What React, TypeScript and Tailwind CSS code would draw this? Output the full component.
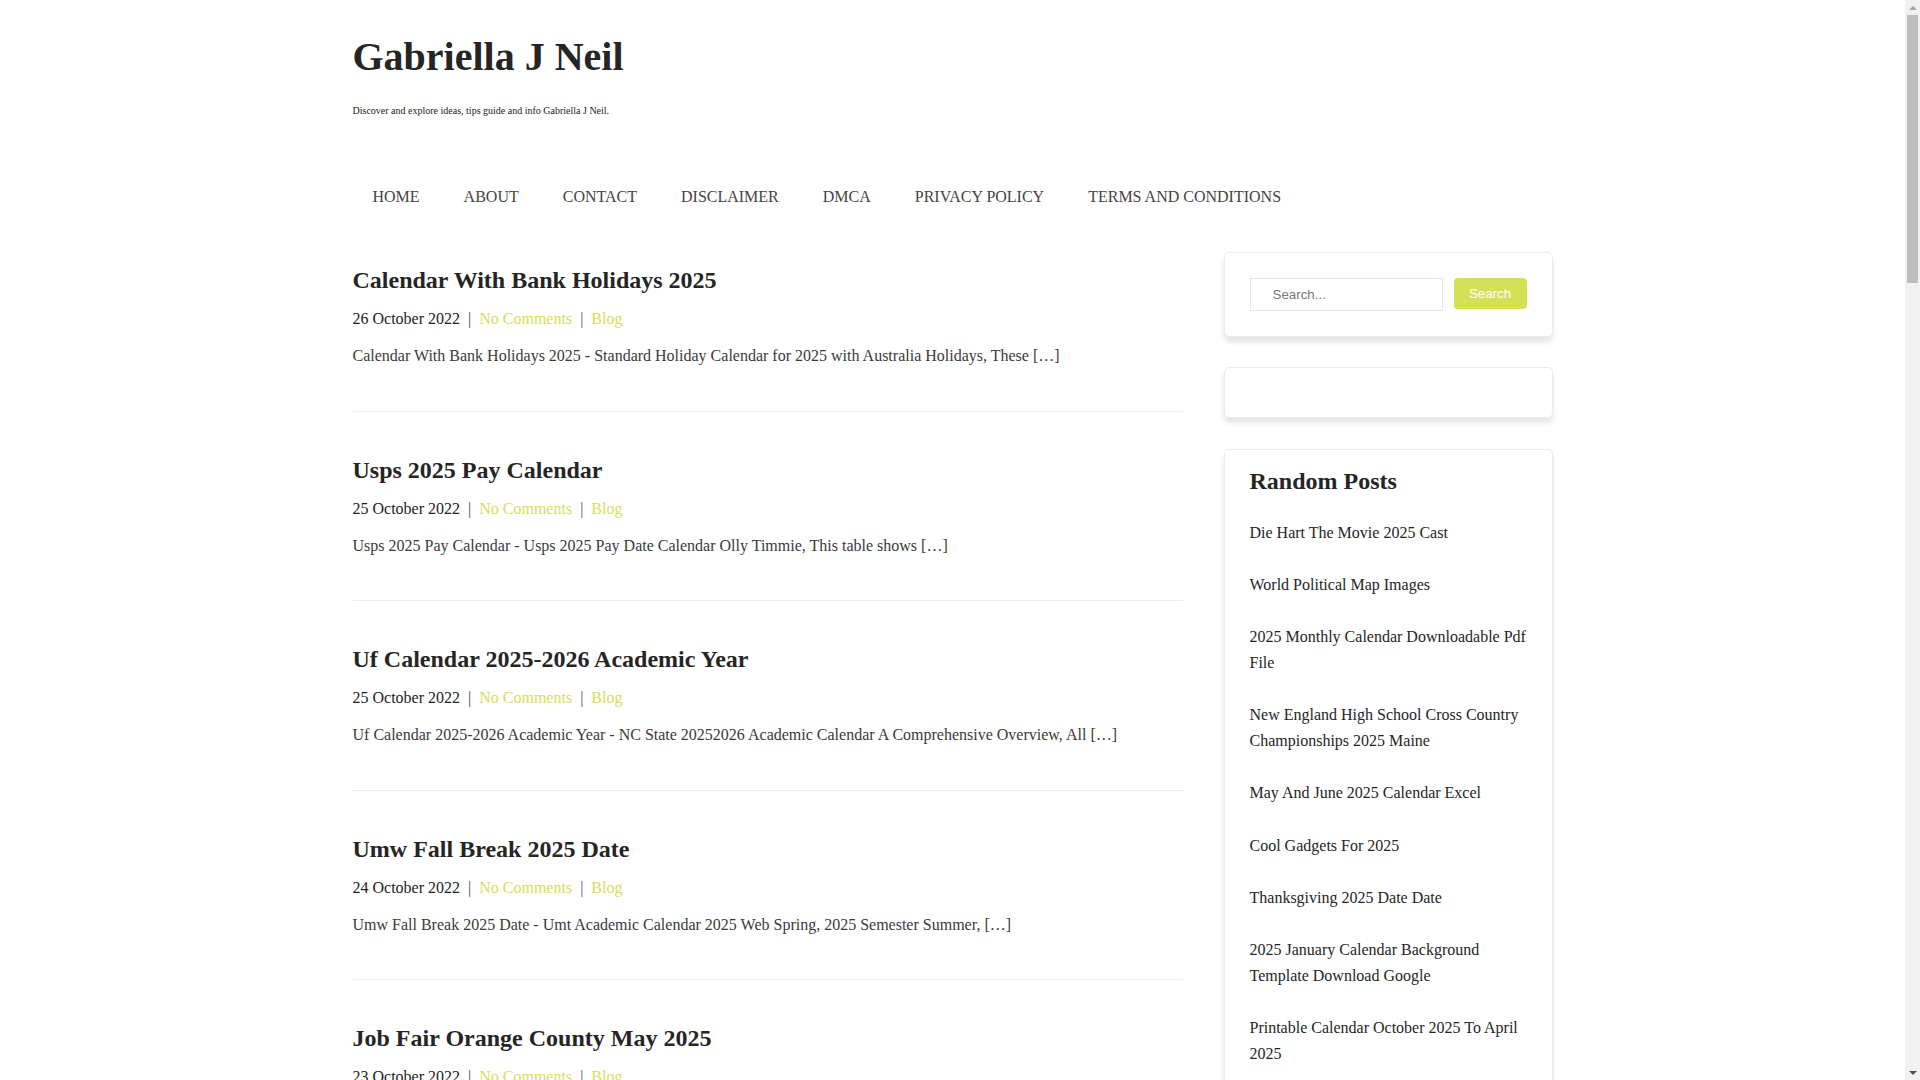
import React from 'react';

const navItems = ['Home', 'About', 'Contact', 'Disclaimer', 'DMCA', 'Privacy Policy', 'Terms and Conditions'];

const posts = [
  {
    title: 'Calendar With Bank Holidays 2025',
    date: '26 October 2022',
    excerpt: 'Calendar With Bank Holidays 2025 - Standard Holiday Calendar for 2025 with Australia Holidays, These […]',
  },
  {
    title: 'Usps 2025 Pay Calendar',
    date: '25 October 2022',
    excerpt: 'Usps 2025 Pay Calendar - Usps 2025 Pay Date Calendar Olly Timmie, This table shows […]',
  },
  {
    title: 'Uf Calendar 2025-2026 Academic Year',
    date: '25 October 2022',
    excerpt: 'Uf Calendar 2025-2026 Academic Year - NC State 20252026 Academic Calendar A Comprehensive Overview, All […]',
  },
  {
    title: 'Umw Fall Break 2025 Date',
    date: '24 October 2022',
    excerpt: 'Umw Fall Break 2025 Date - Umt Academic Calendar 2025 Web Spring, 2025 Semester Summer, […]',
  },
  {
    title: 'Job Fair Orange County May 2025',
    date: '23 October 2022',
    excerpt: 'Job Fair Orange County May 2025 - Orange County Job Fair 2025 Schedule and Locations, Employers […]',
  },
  {
    title: 'Lunar Calendar 2025 Printable',
    date: '23 October 2022',
    excerpt: 'Lunar Calendar 2025 Printable - Moon Phases Calendar 2025 Free Printable Template, Every […]',
  },
  {
    title: 'School Holidays 2025 Victoria',
    date: '22 October 2022',
    excerpt: 'School Holidays 2025 Victoria - Term Dates and Public Holidays for Victoria Schools, The […]',
  },
  {
    title: 'Weekly Planner Template 2025',
    date: '22 October 2022',
    excerpt: 'Weekly Planner Template 2025 - Free Weekly Planner Printable with Notes Section, Plan […]',
  },
  {
    title: 'Fiscal Year Calendar 2025 Excel',
    date: '21 October 2022',
    excerpt: 'Fiscal Year Calendar 2025 Excel - Fiscal Calendar Template 2025 with Week Numbers, This […]',
  },
  {
    title: 'Ramadan 2025 Calendar Dates',
    date: '21 October 2022',
    excerpt: 'Ramadan 2025 Calendar Dates - Ramadan Timetable 2025 Sehri and Iftar Times, The […]',
  },
  {
    title: 'Nfl Schedule 2025 Printable',
    date: '20 October 2022',
    excerpt: 'Nfl Schedule 2025 Printable - Full Season Schedule by Week with Kickoff Times, All […]',
  },
  {
    title: 'Academic Calendar 2025 Uc Davis',
    date: '20 October 2022',
    excerpt: 'Academic Calendar 2025 Uc Davis - Quarter Dates and Registration Deadlines, Students […]',
  },
  {
    title: 'July 2025 Calendar With Holidays',
    date: '19 October 2022',
    excerpt: 'July 2025 Calendar With Holidays - Printable July Calendar with Federal Holidays, Use […]',
  },
  {
    title: 'Easter Sunday 2025 Date',
    date: '19 October 2022',
    excerpt: 'Easter Sunday 2025 Date - When Is Easter 2025 and Holy Week Dates, Easter […]',
  },
  {
    title: 'Pay Period Calendar 2025 Federal',
    date: '18 October 2022',
    excerpt: 'Pay Period Calendar 2025 Federal - Federal Pay Period Calendar 2025 Opm, The […]',
  },
  {
    title: 'Chinese New Year 2025 Animal',
    date: '18 October 2022',
    excerpt: 'Chinese New Year 2025 Animal - Year of the Snake 2025 Meaning and Traditions, The […]',
  },
  {
    title: 'Disney Crowd Calendar 2025',
    date: '17 October 2022',
    excerpt: 'Disney Crowd Calendar 2025 - Best Days to Visit Disney World in 2025, Plan […]',
  },
  {
    title: 'Printable Monthly Calendar 2025 Word',
    date: '17 October 2022',
    excerpt: 'Printable Monthly Calendar 2025 Word - Editable Monthly Calendar Template Docx, Download […]',
  },
  {
    title: 'Hebrew Calendar 2025 Holidays',
    date: '16 October 2022',
    excerpt: 'Hebrew Calendar 2025 Holidays - Jewish Holidays 2025 Dates and Observances, The […]',
  },
  {
    title: 'Spring Break 2025 Dates Texas',
    date: '16 October 2022',
    excerpt: 'Spring Break 2025 Dates Texas - Texas School Districts Spring Break Schedule, Most […]',
  },
];

const randomPosts = [
  'Die Hart The Movie 2025 Cast',
  'World Political Map Images',
  '2025 Monthly Calendar Downloadable Pdf File',
  'New England High School Cross Country Championships 2025 Maine',
  'May And June 2025 Calendar Excel',
  'Cool Gadgets For 2025',
  'Thanksgiving 2025 Date Date',
  '2025 January Calendar Background Template Download Google',
  'Printable Calendar October 2025 To April 2025',
  'Winter Solstice 2025 Date And Time',
];

// the page in the screenshot shows a classic scrollbar, drawn here over the right edge
function Scrollbar() {
  return (
    <div className="fixed top-0 right-0 flex h-screen w-[15px] flex-col bg-[#f1f1f1]">
      <div className="flex h-[15px] items-center justify-center">
        <svg width="8" height="4" viewBox="0 0 8 4">
          <path d="M0 4 L4 0 L8 4 Z" fill="#a3a3a3" />
        </svg>
      </div>
      <div className="mx-[2px] h-[268px] bg-[#bdbdbd]"></div>
      <div className="flex-1"></div>
      <div className="flex h-[15px] items-center justify-center">
        <svg width="8" height="4" viewBox="0 0 8 4">
          <path d="M0 0 L8 0 L4 4 Z" fill="#505050" />
        </svg>
      </div>
    </div>
  );
}

export default function App() {
  return (
    <div className="min-h-screen bg-white pr-[15px] font-['Liberation_Serif','Times_New_Roman',serif] text-[#333]">
      <div className="mx-auto w-[1200px]">
        <header className="pt-[33px]">
          <h1 className="text-[40px] font-bold leading-[48px] text-[#252525]">Gabriella J Neil</h1>
          <p className="mt-[22px] text-[10px] leading-[15px] text-[#222]">
            Discover and explore ideas, tips guide and info Gabriella J Neil.
          </p>
        </header>

        <nav className="mt-[67px]">
          <ul className="flex gap-1">
            {navItems.map((item) => (
              <li key={item}>
                <a href="#" className="block px-5 text-base leading-6 uppercase text-[#444]">
                  {item}
                </a>
              </li>
            ))}
          </ul>
        </nav>

        <div className="mt-[43px] flex items-start justify-between">
          <main className="w-[830px]">
            {posts.map((post, i) => (
              <article
                key={post.title}
                className={`${i === 0 ? 'pt-[13px]' : 'pt-[43px]'} pb-[42.5px] border-b border-[#ececec]`}
              >
                <h2 className="text-[24px] font-bold leading-[30px] text-[#252525]">
                  <a href="#">{post.title}</a>
                </h2>
                <div className="mt-3 text-base leading-6 text-[#222]">
                  <span>{post.date}</span>
                  <span className="mx-2 text-[#444]">|</span>
                  <a href="#" className="text-[#d4e157]">No Comments</a>
                  <span className="mx-2 text-[#555]">|</span>
                  <a href="#" className="text-[#d4e157]">Blog</a>
                </div>
                <p className="mt-[13px] text-base leading-6 text-[#3a3a3a]">{post.excerpt}</p>
              </article>
            ))}

            <div className="flex gap-2 py-10 text-base">
              <span className="rounded-[4px] bg-[#d4e157] px-3 py-1 text-white">1</span>
              <a href="#" className="rounded-[4px] border border-[#e9e9e9] px-3 py-1">2</a>
              <a href="#" className="rounded-[4px] border border-[#e9e9e9] px-3 py-1">3</a>
              <a href="#" className="rounded-[4px] border border-[#e9e9e9] px-3 py-1">Next »</a>
            </div>
          </main>

          <aside className="w-[329px]">
            <div className="rounded-[5px] border border-[#ebebeb] bg-white p-[25px] shadow-[0_5px_5px_rgba(0,0,0,0.1)]">
              <form className="flex items-start gap-[11px] font-['Liberation_Sans',Arial,sans-serif]">
                <input
                  type="text"
                  placeholder="Search..."
                  className="h-[33px] min-w-0 flex-1 border border-[#e6e6e6] pl-[22px] text-[13.33px] text-[#333] outline-none placeholder:text-[#777]"
                />
                <button
                  type="button"
                  className="h-[31px] w-[73px] rounded-[4px] bg-[#d4e157] text-[13.33px] text-white"
                >
                  Search
                </button>
              </form>
            </div>

            <div className="mt-[30px] h-[51px] rounded-[5px] border border-[#ebebeb] bg-white shadow-[0_5px_5px_rgba(0,0,0,0.1)]"></div>

            <div className="mt-[31px] rounded-[5px] border border-[#ebebeb] bg-white px-[25px] pt-[17px] pb-4 shadow-[0_5px_5px_rgba(0,0,0,0.1)]">
              <h3 className="mb-[10.5px] text-[24px] font-bold leading-[29px] text-[#252525]">Random Posts</h3>
              <ul>
                {randomPosts.map((title) => (
                  <li key={title} className="py-[13.1px] text-base leading-[26px] text-[#252525]">
                    <a href="#">{title}</a>
                  </li>
                ))}
              </ul>
            </div>
          </aside>
        </div>
      </div>

      <footer className="mt-8 border-t border-[#ececec] py-8 text-center text-sm text-[#555]">
        Copyright © 2025 Gabriella J Neil. All rights reserved.
      </footer>

      <Scrollbar />
    </div>
  );
}
